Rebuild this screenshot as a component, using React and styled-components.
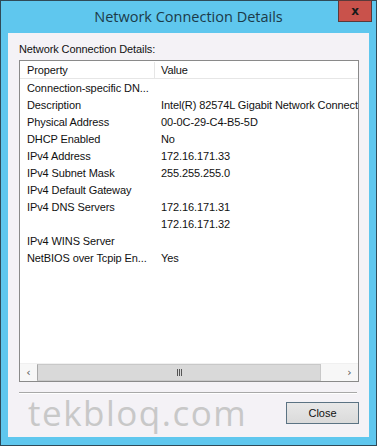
import React from "react";
import styled, { createGlobalStyle } from "styled-components";

const Global = createGlobalStyle`
  html, body { margin: 0; padding: 0; background: #ffffff; }
  body { font-family: "Liberation Sans", Arial, sans-serif; }
`;

const Window = styled.div`
  box-sizing: border-box;
  width: 377px;
  height: 446px;
  background: #5fc7ee;
  border: 1px solid #2f4a58;
  display: flex;
  flex-direction: column;
  padding: 0 7px 8px 7px;
`;

const TitleBar = styled.div`
  position: relative;
  height: 32px;
  display: flex;
  align-items: center;
  justify-content: center;
  font-family: "Open Sans", "Noto Sans", sans-serif;
  font-size: 14.5px;
  color: #1c3a48;
  padding-bottom: 1px;
  box-sizing: border-box;
`;

const CloseX = styled.div`
  position: absolute;
  top: -1px;
  right: -3px;
  width: 34px;
  height: 22px;
  box-sizing: border-box;
  background: #c9524b;
  border: 1px solid #5a3a3a;
  display: flex;
  align-items: center;
  justify-content: center;
  font-family: "DejaVu Sans", sans-serif;
  font-weight: bold;
  font-size: 12px;
  color: #1a1a1a;
`;

const Panel = styled.div`
  flex: 1;
  background: #f4f2f6;
  display: flex;
  flex-direction: column;
  padding: 8px 10px 0 11px;
  font-size: 11px;
  color: #111;
`;

const Label = styled.div`
  height: 19px;
  line-height: 16px;
  font-size: 11px;
  letter-spacing: -0.1px;
`;

const ListBox = styled.div`
  box-sizing: border-box;
  height: 322px;
  border: 1px solid #8a8a8a;
  background: #ffffff;
  display: flex;
  flex-direction: column;
  overflow: hidden;
  letter-spacing: -0.1px;
`;

const Body = styled.div`
  flex: 1;
  overflow: hidden;
`;

const Row = styled.div`
  display: grid;
  grid-template-columns: 135px 1fr;
  height: ${(p) => (p.$header ? "18px" : "17px")};
  align-items: center;
  white-space: nowrap;
  ${(p) => (p.$header ? "border-bottom: 1px solid #e6e6e6; box-sizing: border-box; padding-top: 1px;" : "")}
`;

const Cell = styled.div`
  padding-left: ${(p) => (p.$first ? "7px" : "6px")};
  overflow: hidden;
  height: 100%;
  display: flex;
  align-items: center;
  ${(p) => (p.$divider ? "border-right: 1px solid #e6e6e6;" : "")}
`;

const ScrollBar = styled.div`
  height: 17px;
  display: flex;
  background: #f0f0f0;
  border-top: 1px solid #f0f0f0;
`;

const Arrow = styled.div`
  width: 17px;
  display: flex;
  align-items: center;
  justify-content: center;
  color: #555;
  font-family: "DejaVu Sans", sans-serif;
  font-size: 11px;
  background: #f7f7f7;
`;

const Track = styled.div`
  flex: 1;
  display: flex;
  background: #f7f7f7;
`;

const Thumb = styled.div`
  box-sizing: border-box;
  width: 284px;
  background: #d9d9d9;
  border: 1px solid #c8c8c8;
  border-left-color: #a8a8a8;
  display: flex;
  align-items: center;
  justify-content: center;
`;

const Grip = styled.div`
  display: flex;
  gap: 1px;
  span {
    width: 1px;
    height: 7px;
    background: #555;
  }
`;

const Separator = styled.div`
  margin-top: 10px;
  height: 1px;
  background: #a8a8a8;
  border-bottom: 1px solid #ffffff;
  margin-right: 2px;
`;

const Footer = styled.div`
  display: flex;
  align-items: center;
  justify-content: space-between;
  padding: 0 0 0 9px;
  height: 42px;
`;

const Watermark = styled.div`
  font-family: "Open Sans", "Noto Sans", sans-serif;
  font-size: 35px;
  letter-spacing: 1.5px;
  color: #c8c8c8;
  margin-top: -5px;
`;

const Button = styled.button`
  box-sizing: border-box;
  width: 73px;
  height: 22px;
  margin-top: -4px;
  border: 1px solid #5b7383;
  background: linear-gradient(#e8e8e8, #dadada);
  font-family: "Liberation Sans", Arial, sans-serif;
  font-size: 11px;
  color: #111;
  padding: 0;
`;

const rows = [
  ["Connection-specific DN...", ""],
  ["Description", "Intel(R) 82574L Gigabit Network Connect"],
  ["Physical Address", "00-0C-29-C4-B5-5D"],
  ["DHCP Enabled", "No"],
  ["IPv4 Address", "172.16.171.33"],
  ["IPv4 Subnet Mask", "255.255.255.0"],
  ["IPv4 Default Gateway", ""],
  ["IPv4 DNS Servers", "172.16.171.31"],
  ["", "172.16.171.32"],
  ["IPv4 WINS Server", ""],
  ["NetBIOS over Tcpip En...", "Yes"],
];

export default function App() {
  return (
    <>
      <Global />
      <Window>
        <TitleBar>
          Network Connection Details
          <CloseX>x</CloseX>
        </TitleBar>
        <Panel>
          <Label>Network Connection Details:</Label>
          <ListBox>
            <Row $header>
              <Cell $first $divider>Property</Cell>
              <Cell>Value</Cell>
            </Row>
            <Body>
              {rows.map(([k, v], i) => (
                <Row key={i}>
                  <Cell $first>{k}</Cell>
                  <Cell>{v}</Cell>
                </Row>
              ))}
            </Body>
            <ScrollBar>
              <Arrow>‹</Arrow>
              <Track>
                <Thumb>
                  <Grip>
                    <span />
                    <span />
                    <span />
                  </Grip>
                </Thumb>
              </Track>
              <Arrow>›</Arrow>
            </ScrollBar>
          </ListBox>
          <Separator />
          <Footer>
            <Watermark>tekbloq.com</Watermark>
            <Button>Close</Button>
          </Footer>
        </Panel>
      </Window>
    </>
  );
}
